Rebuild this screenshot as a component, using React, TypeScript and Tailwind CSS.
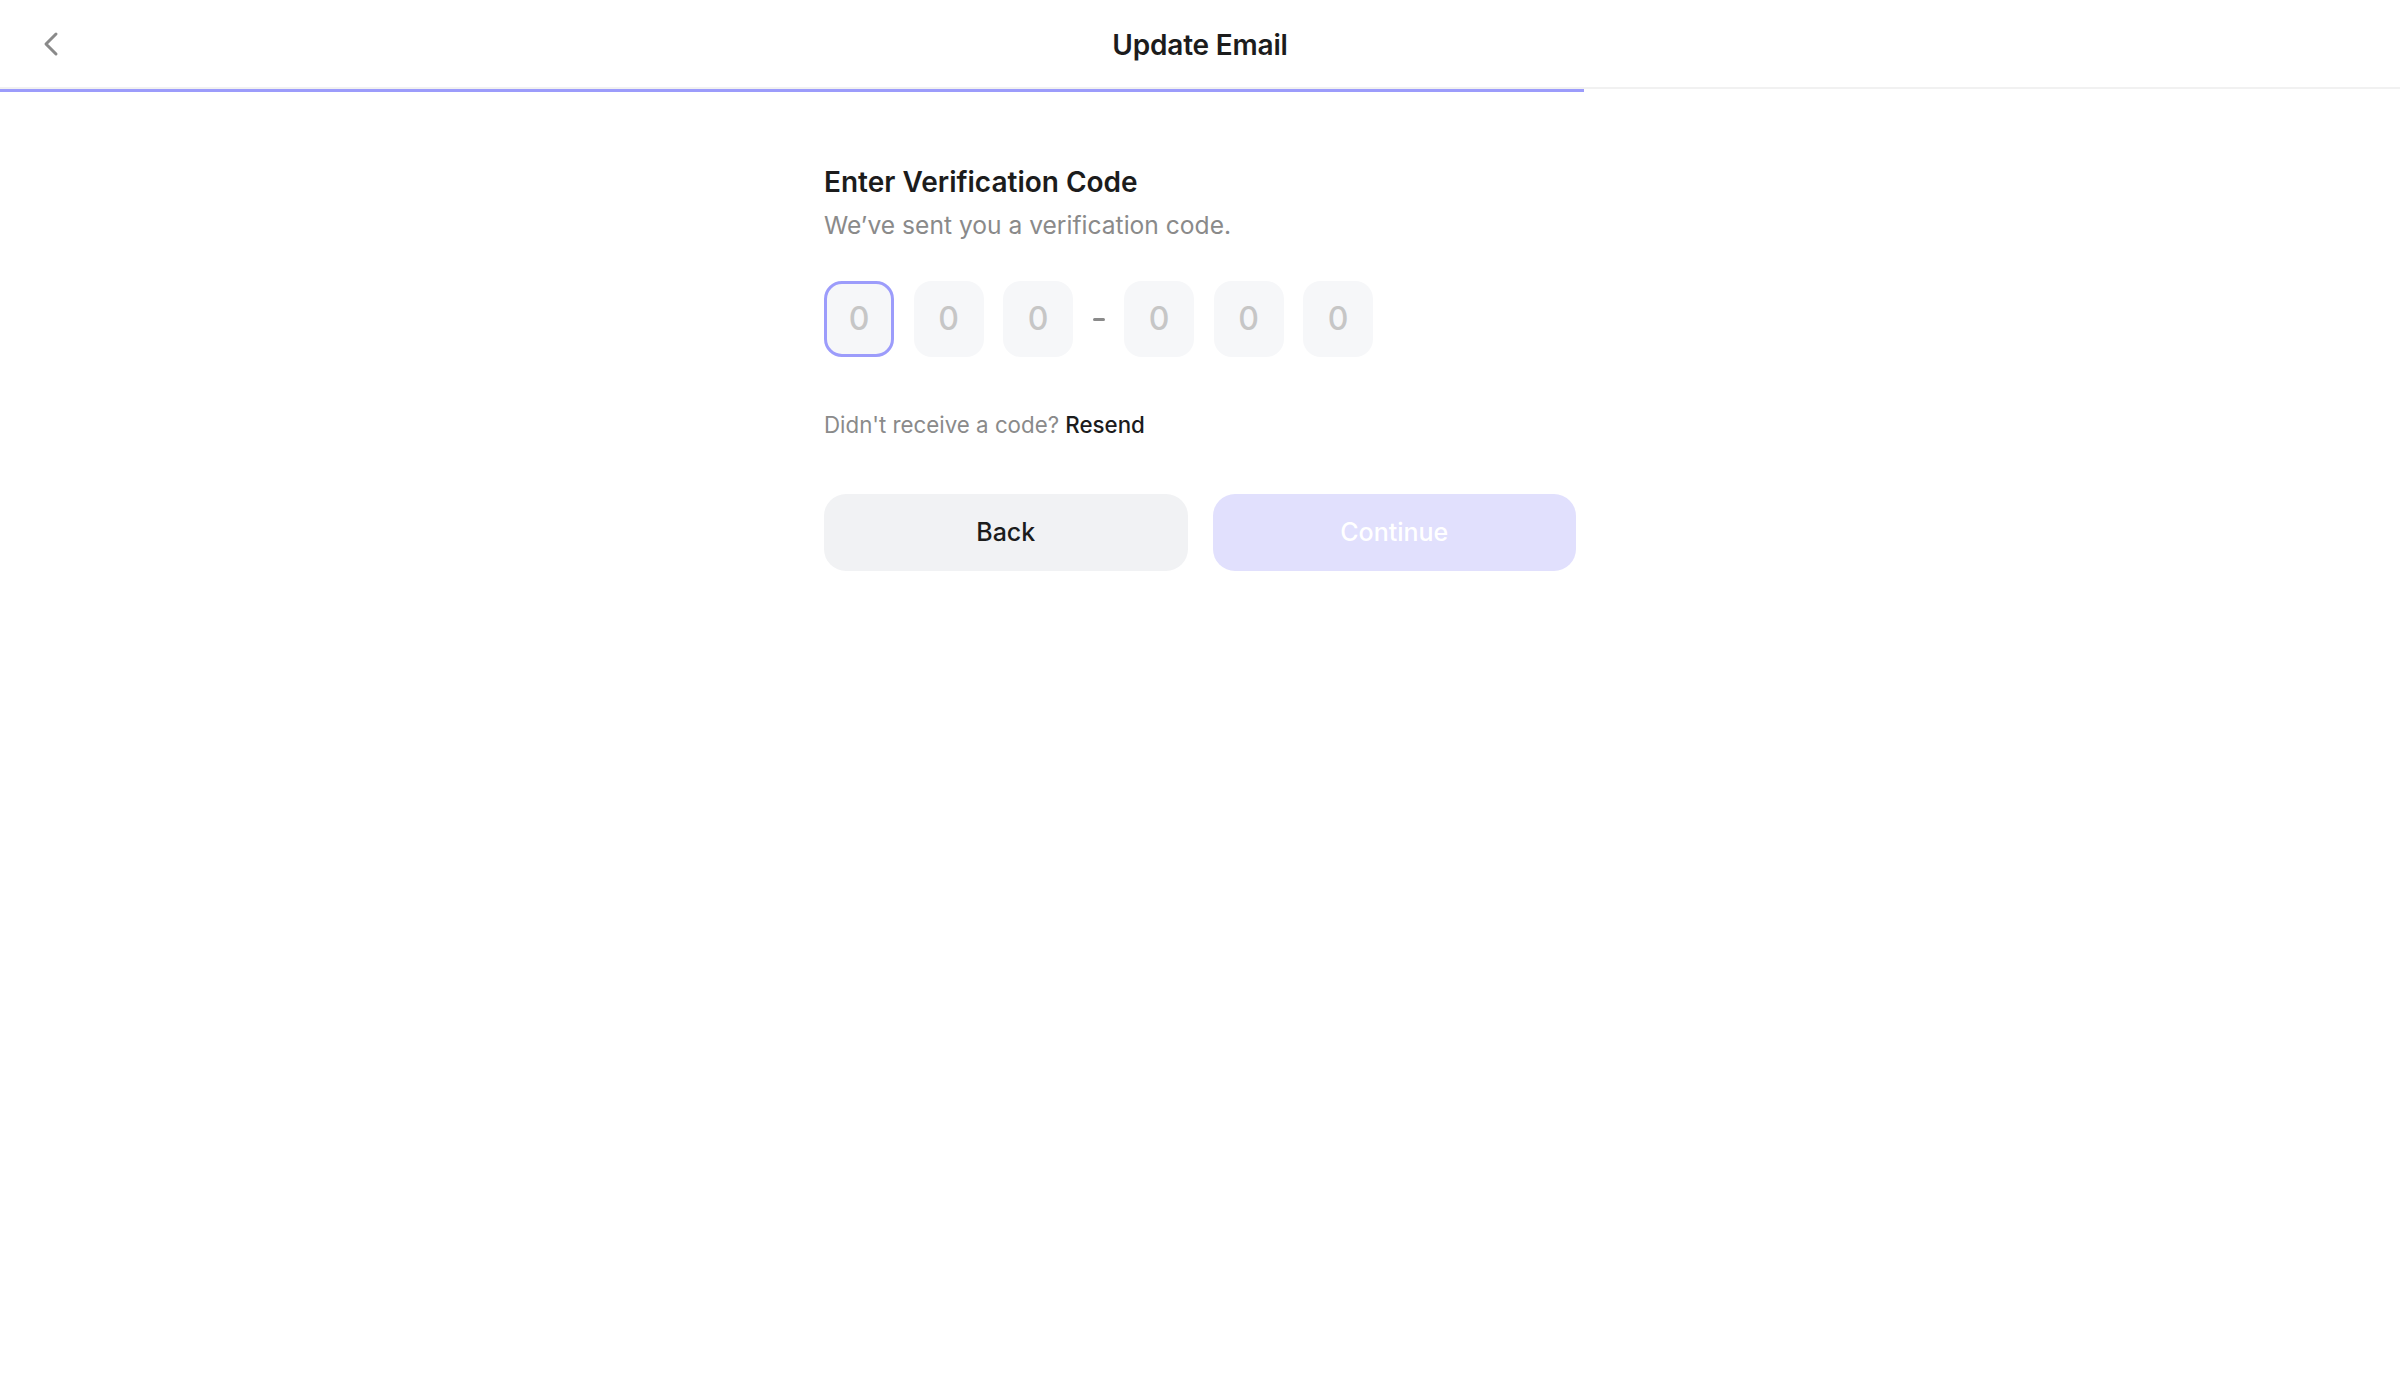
import React from "react";

export default function App() {
  const digits = [0, 1, 2, 3, 4, 5];
  return (
    <div className="min-h-screen bg-white" style={{ fontFamily: "Inter, 'Noto Sans', sans-serif" }}>
      <header className="grid h-[89px] grid-cols-[1fr_auto_1fr] items-center border-b-2 border-[#f1f1f1]">
        <div className="pl-[31px]">
          <svg width="40" height="40" viewBox="0 0 24 24" fill="none" stroke="#8a8a8a" strokeWidth="1.8" strokeLinecap="round" strokeLinejoin="round">
            <path d="m15 18-6-6 6-6" />
          </svg>
        </div>
        <h1 className="pt-[2px] text-[28px] font-semibold leading-none tracking-[-0.2px] text-[#1c1c1c]">Update Email</h1>
        <div />
      </header>
      <div className="h-[3px] w-[66%] bg-[#9c9cfb]" />
      <main className="mx-auto w-[752px] pt-[73.5px]">
        <h2 className="text-[28px] font-semibold leading-[32px] text-[#1c1c1c]">Enter Verification Code</h2>
        <p className="mt-[9.5px] text-[24.6px] leading-[36px] text-[#8a8a8a]">We’ve sent you a verification code.</p>
        <div className="mt-[38px] flex items-center gap-[19.5px]">
          {digits.map((i) => (
            <React.Fragment key={i}>
              {i === 3 && <div className="h-[3px] w-[12px] rounded-full bg-[#8a8a8a]" />}
              <div
                className={
                  i === 0
                    ? "flex h-[76px] w-[70px] items-center justify-center rounded-[18px] border-[3px] border-[#9c9cfb] bg-[#f6f7f9] text-[32px] font-medium text-[#c6c6c6]"
                    : "flex h-[76px] w-[70px] items-center justify-center rounded-[18px] bg-[#f6f7f9] text-[32px] font-medium text-[#c6c6c6]"
                }
              >
                0
              </div>
            </React.Fragment>
          ))}
        </div>
        <p className="mt-[53px] text-[22.3px] leading-[30px] text-[#8a8a8a]">
          Didn't receive a code? <span className="font-medium text-[#1c1c1c]">Resend</span>
        </p>
        <div className="mt-[54px] flex gap-[25px]">
          <button className="flex h-[77px] flex-1 items-center justify-center rounded-[22px] bg-[#f1f2f4] text-[25px] font-medium text-[#1c1c1c]">
            Back
          </button>
          <button className="flex h-[77px] flex-1 items-center justify-center rounded-[22px] bg-[#e1e0fd] text-[25px] font-medium text-white">
            Continue
          </button>
        </div>
      </main>
    </div>
  );
}
